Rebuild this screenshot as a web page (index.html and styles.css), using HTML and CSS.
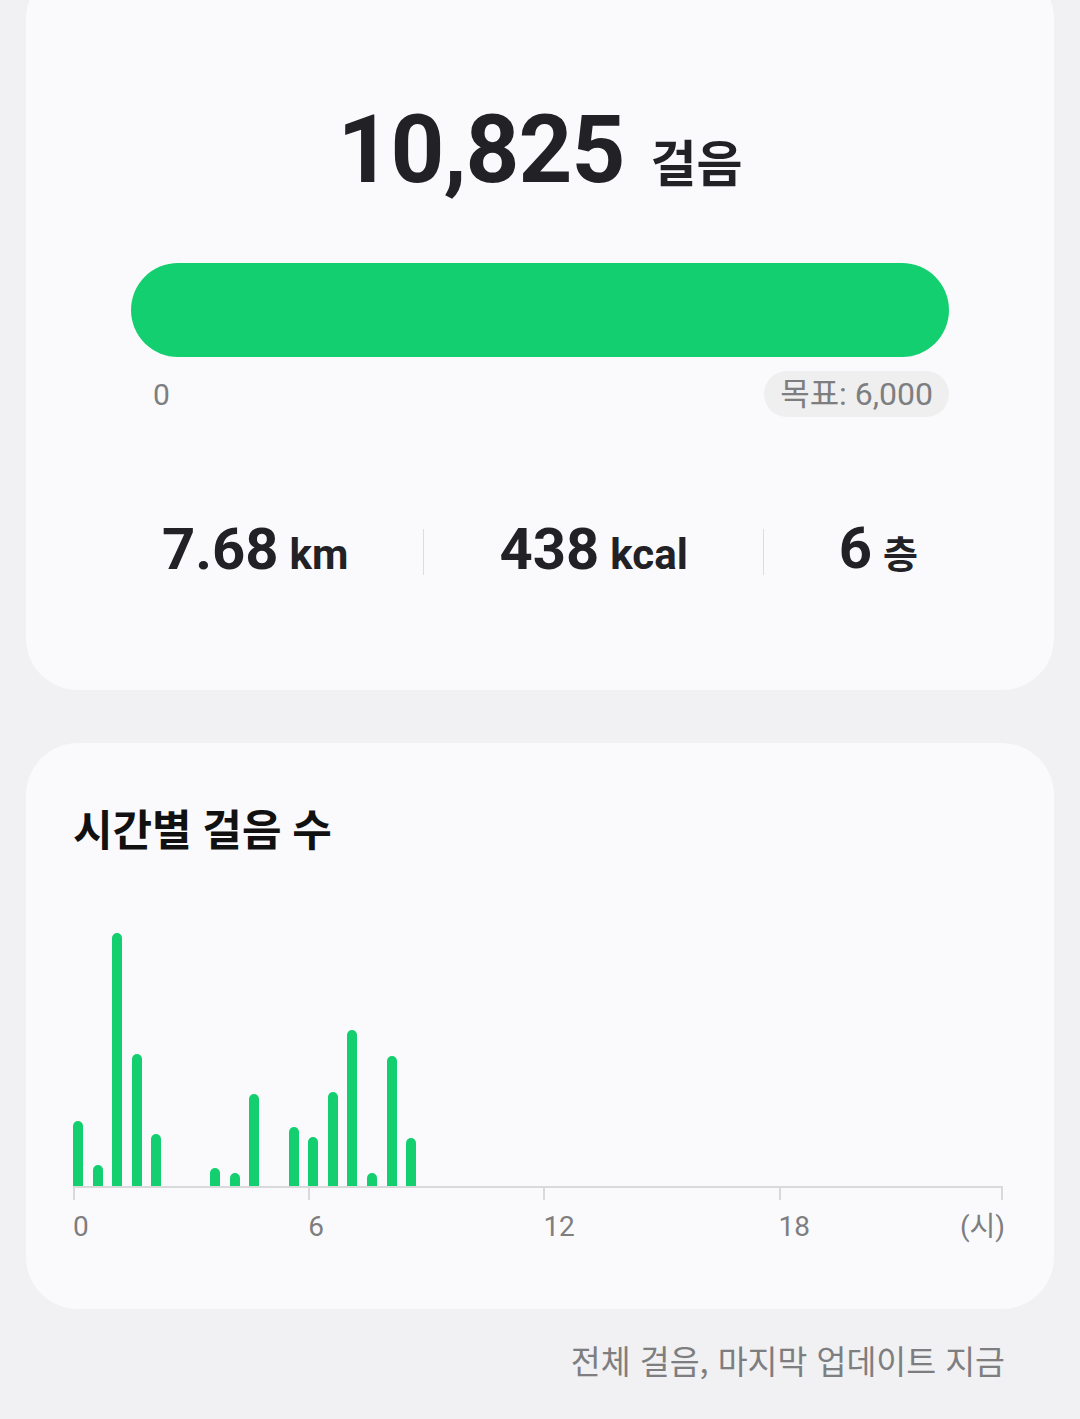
FILE: index.html
```html
<!DOCTYPE html>
<html lang="ko">
<head>
    <meta charset="UTF-8">
    <meta name="viewport" content="width=device-width, initial-scale=1.0">
    <title>걸음 수</title>
    <link rel="stylesheet" href="styles.css">
</head>
<body>
    <div class="page">
        <div class="card summary">
            <h1 class="total">10,825<span class="total-unit">걸음</span></h1>

            <div class="progress">
                <div class="progress-fill"></div>
            </div>
            <div class="progress-labels">
                <span class="zero">0</span>
                <span class="goal">목표: 6,000</span>
            </div>

            <div class="stats">
                <div class="stat">7.68<span class="stat-unit">km</span></div>
                <div class="divider"></div>
                <div class="stat">438<span class="stat-unit">kcal</span></div>
                <div class="divider"></div>
                <div class="stat">6<span class="stat-unit kr">층</span></div>
            </div>
        </div>

        <div class="card hourly">
            <h2 class="card-title">시간별 걸음 수</h2>

            <div class="chart">
                <div class="bars" id="bars"></div>
                <div class="ticks">
                    <div class="tick-seg"></div>
                    <div class="tick-seg"></div>
                    <div class="tick-seg"></div>
                    <div class="tick-seg last"></div>
                </div>
                <div class="axis-labels">
                    <span class="axis-seg">0</span>
                    <span class="axis-seg">6</span>
                    <span class="axis-seg">12</span>
                    <span class="axis-seg last"><span>18</span><span>(시)</span></span>
                </div>
            </div>
        </div>

        <p class="updated">전체 걸음, 마지막 업데이트 지금</p>
    </div>

    <script>
        // steps per half hour, scaled to pixel height of the bar (max ~253)
        const halfHours = [65, 21, 253, 132, 52, 0, 0, 18, 13, 92, 0, 59, 49, 94, 156, 13, 130, 48];
        const bars = document.getElementById('bars');

        for (let i = 0; i < 48; i++) {
            const slot = document.createElement('div');
            slot.className = 'slot';
            const h = halfHours[i] || 0;
            if (h > 0) {
                const bar = document.createElement('div');
                bar.className = 'bar';
                bar.style.height = h + 'px';
                slot.appendChild(bar);
            }
            bars.appendChild(slot);
        }
    </script>
</body>
</html>
```

FILE: styles.css
```css
body {
    margin: 0;
    padding: 0;
    background-color: #f1f1f3;
    font-family: Roboto, "Noto Sans CJK KR", sans-serif;
    color: #222226;
}

.page {
    padding: 0 26px;
}

/* white rounded panels */
.card {
    background-color: #fafafc;
    border-radius: 52px;
}

.summary {
    margin-top: -33px;
    padding: 136px 105px 105px;
}

.total {
    margin: 0;
    font-size: 94px;
    font-weight: 700;
    line-height: 1;
    text-align: center;
    letter-spacing: -1px;
}

.total-unit {
    margin-left: 26px;
    font-size: 50px;
    letter-spacing: 0;
}

/* goal progress bar */
.progress {
    margin-top: 66px;
    height: 94px;
    border-radius: 47px;
    background-color: #e6e6e8;
    overflow: hidden;
}

.progress-fill {
    width: 100%;
    height: 100%;
    background-color: #14cf6f;
}

.progress-labels {
    margin-top: 14px;
    display: flex;
    justify-content: space-between;
    align-items: center;
    color: #7e7e80;
    font-size: 30px;
}

.zero {
    padding-left: 22px;
}

.goal {
    height: 46px;
    line-height: 46px;
    padding: 0 16px;
    border-radius: 23px;
    background-color: #efeff0;
    font-size: 32px;
}

/* distance / calories / floors */
.stats {
    margin-top: 101px;
    display: flex;
    justify-content: center;
    align-items: center;
}

.stat {
    font-size: 58px;
    font-weight: 700;
    line-height: 60px;
    white-space: nowrap;
}

.stat-unit {
    margin-left: 11px;
    font-size: 42px;
}

.stat-unit.kr {
    font-size: 38px;
}

.divider {
    width: 1px;
    height: 46px;
    margin: 0 75px;
    background-color: #dcdcde;
}

/* hourly chart */
.hourly {
    margin-top: 53px;
    padding: 63px 51px 65px 47px;
}

.card-title {
    margin: 0;
    font-size: 43px;
    font-weight: 700;
    line-height: 50px;
    color: #111;
}

.chart {
    width: 930px;
    margin-top: 70px;
}

.bars {
    height: 260px;
    display: grid;
    grid-template-columns: repeat(48, 19.6px);
    align-items: end;
    overflow: visible;
    border-bottom: 2px solid #d9d9db;
}

.slot {
    height: 100%;
    display: flex;
    align-items: flex-end;
}

.bar {
    width: 10px;
    border-radius: 5px 5px 0 0;
    background-color: #14cf6f;
}

.ticks {
    display: flex;
    height: 12px;
}

.tick-seg {
    width: 235.2px;
    flex-shrink: 0;
    box-sizing: border-box;
    border-left: 2px solid #d9d9db;
}

.tick-seg.last {
    width: auto;
    flex: 1;
    border-right: 2px solid #d9d9db;
}

.axis-labels {
    margin-top: 10px;
    display: flex;
    font-size: 28px;
    line-height: 34px;
    color: #7e7e80;
}

.axis-seg {
    width: 235.2px;
    flex-shrink: 0;
}

.axis-seg.last {
    width: auto;
    flex: 1;
    display: flex;
    justify-content: space-between;
    margin-right: -2px;
}

.updated {
    margin: 28px 49px 0 0;
    text-align: right;
    font-family: "Noto Sans CJK KR", sans-serif;
    font-size: 32.5px;
    line-height: 1.4;
    color: #7e7e80;
}
```
